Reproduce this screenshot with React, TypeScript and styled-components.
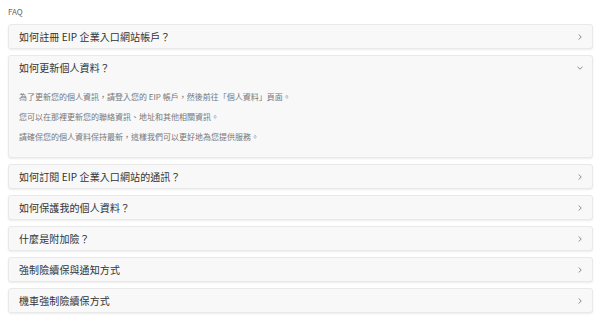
import React, { useState } from "react";
import styled, { createGlobalStyle } from "styled-components";

const GlobalStyle = createGlobalStyle`
  body {
    margin: 0;
    background: #fff;
    font-family: "Noto Sans CJK TC", "Noto Sans", sans-serif;
  }
`;

const Page = styled.div`
  padding: 6px 12px 8px 8px;
`;

const Heading = styled.div`
  font-size: 8px;
  line-height: 12px;
  color: #666;
  margin-bottom: 6px;
`;

const List = styled.div`
  display: flex;
  flex-direction: column;
  gap: 6px;
`;

const Card = styled.div`
  background: #f8f8f8;
  border: 1px solid #e9e9e9;
  border-radius: 3px;
  box-shadow: 0 1px 2px rgba(0, 0, 0, 0.08);
`;

const Header = styled.div`
  height: 23px;
  display: flex;
  align-items: center;
  justify-content: space-between;
  padding: 0 8px 0 10px;
  cursor: pointer;
`;

const Title = styled.span`
  font-size: 10px;
  color: #333;
  letter-spacing: 0.1px;
`;

const Body = styled.div`
  padding: 8px 10px 10px;
`;

const Line = styled.p`
  margin: 0;
  font-size: 8px;
  line-height: 20px;
  color: #777;
`;

const Chevron = ({ open }: { open: boolean }) => (
  <svg width="8" height="8" viewBox="0 0 8 8" fill="none">
    <path
      d={open ? "M1.5 2.8 L4 5.2 L6.5 2.8" : "M2.8 1.5 L5.2 4 L2.8 6.5"}
      stroke="#888"
      strokeWidth="1"
    />
  </svg>
);

const faqs = [
  { q: "如何註冊 EIP 企業入口網站帳戶？", a: [] as string[] },
  {
    q: "如何更新個人資料？",
    a: [
      "為了更新您的個人資訊，請登入您的 EIP 帳戶，然後前往「個人資料」頁面。",
      "您可以在那裡更新您的聯絡資訊、地址和其他相關資訊。",
      "請確保您的個人資料保持最新，這樣我們可以更好地為您提供服務。",
    ],
  },
  { q: "如何訂閱 EIP 企業入口網站的通訊？", a: [] },
  { q: "如何保護我的個人資料？", a: [] },
  { q: "什麼是附加險？", a: [] },
  { q: "強制險續保與通知方式", a: [] },
  { q: "機車強制險續保方式", a: [] },
];

export default function App() {
  const [openIndex, setOpenIndex] = useState<number | null>(1);
  return (
    <Page>
      <GlobalStyle />
      <Heading>FAQ</Heading>
      <List>
        {faqs.map((f, i) => {
          const open = openIndex === i;
          return (
            <Card key={f.q}>
              <Header onClick={() => setOpenIndex(open ? null : i)}>
                <Title>{f.q}</Title>
                <Chevron open={open} />
              </Header>
              {open && (
                <Body>
                  {f.a.map((l) => (
                    <Line key={l}>{l}</Line>
                  ))}
                </Body>
              )}
            </Card>
          );
        })}
      </List>
    </Page>
  );
}
